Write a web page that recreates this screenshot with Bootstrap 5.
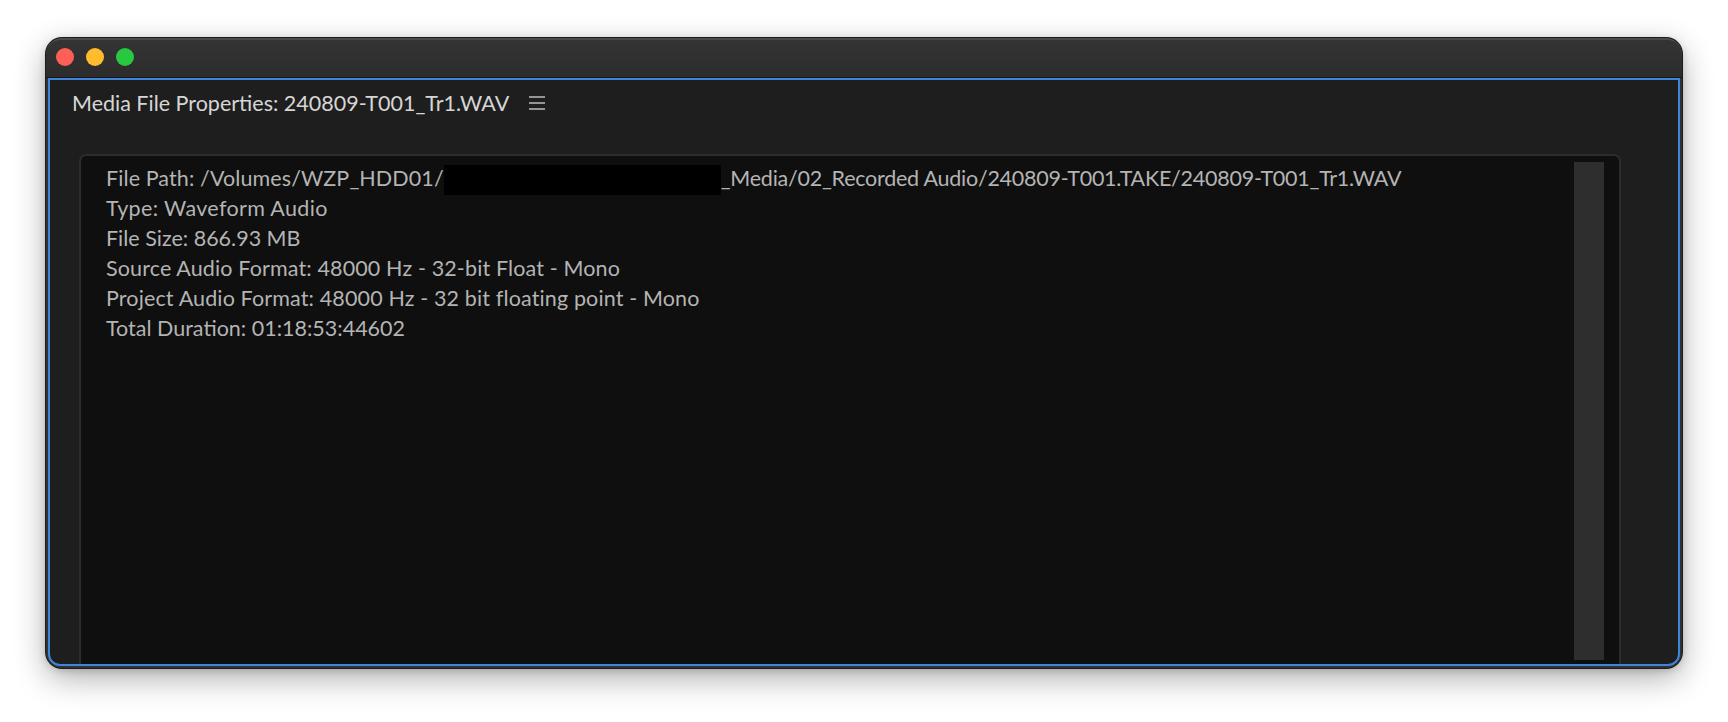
<!DOCTYPE html>
<html lang="en">
<head>
<meta charset="utf-8">
<title>Media File Properties</title>
<link href="https://cdn.jsdelivr.net/npm/bootstrap@5.3.0/dist/css/bootstrap.min.css" rel="stylesheet">
<style>
html,body{height:722px;overflow:hidden;background:#fff}
body{padding:38px 46px 54px 46px;font-family:"Lato","Liberation Sans",sans-serif}
.mac-window{width:1636px;height:630px;background:#2f3338;border-radius:16px;box-shadow:0 0 0 1px #1c1c1c,0 10px 32px rgba(0,0,0,.32),0 2px 8px rgba(0,0,0,.18);border-top:2px solid #4a4a4a;overflow:hidden}
.title-strip{height:38px;flex:none;padding:0 0 3px 10px;gap:12px;background:linear-gradient(#343434,#2c2c2c);border-bottom:1px solid #161616}
.dot{width:18px;height:18px;border-radius:50%}
.dot-red{background:#fe5f57}.dot-yellow{background:#febc2e}.dot-green{background:#28c840}
.panel-frame{height:588px;margin:0 2px;border:2px solid #3f86db;background:#1e1e1e;border-bottom-left-radius:12px;border-bottom-right-radius:12px;overflow:hidden;flex:none}
.panel-tab{height:46px;padding-left:22px;color:#d6d6d6;font-size:21.5px;gap:20px}
.menu-glyph{width:16px;height:14px;display:block}
.props-box{height:600px;margin:28px 0 0 29px;width:1542px;background:#0f0f0f;border:2px solid #2c2c2c;border-radius:7px;padding:6px 15px 0 25px}
.props-text{color:#b4b4b4;font-size:21.5px;line-height:30px;white-space:nowrap;flex:1;padding-top:1px}
.redact{display:inline-block;width:277px;height:30px;background:#000;vertical-align:top;margin:2px 0 -2px}
.track{width:30px;height:498px;background:#2e2e2e}
.sp-path-a{letter-spacing:.1px}
.sp-path-b{letter-spacing:-.24px}
.sp-type{letter-spacing:.35px}
.sp-format{letter-spacing:.135px}
</style>
</head>
<body>
<div class="mac-window d-flex flex-column">
  <div class="title-strip d-flex align-items-center">
    <span class="dot dot-red"></span><span class="dot dot-yellow"></span><span class="dot dot-green"></span>
  </div>
  <div class="panel-frame">
    <div class="panel-tab d-flex align-items-center">
      <span>Media File Properties: 240809-T001_Tr1.WAV</span>
      <svg class="menu-glyph" viewBox="0 0 16 14"><path d="M0 1h16M0 7h16M0 13h16" stroke="#bdbdbd" stroke-width="1.7" fill="none"/></svg>
    </div>
    <div class="props-box d-flex">
      <div class="props-text">
        <div><span class="sp-path-a">File Path: /Volumes/WZP_HDD01/</span><span class="redact"></span><span class="sp-path-b">_Media/02_Recorded Audio/240809-T001.TAKE/240809-T001_Tr1.WAV</span></div>
        <div class="sp-type">Type: Waveform Audio</div>
        <div>File Size: 866.93 MB</div>
        <div class="sp-format">Source Audio Format: 48000 Hz - 32-bit Float - Mono</div>
        <div class="sp-format">Project Audio Format: 48000 Hz - 32 bit floating point - Mono</div>
        <div>Total Duration: 01:18:53:44602</div>
      </div>
      <div class="track"></div>
    </div>
  </div>
</div>
<script src="https://cdn.jsdelivr.net/npm/bootstrap@5.3.0/dist/js/bootstrap.bundle.min.js"></script>
</body>
</html>
